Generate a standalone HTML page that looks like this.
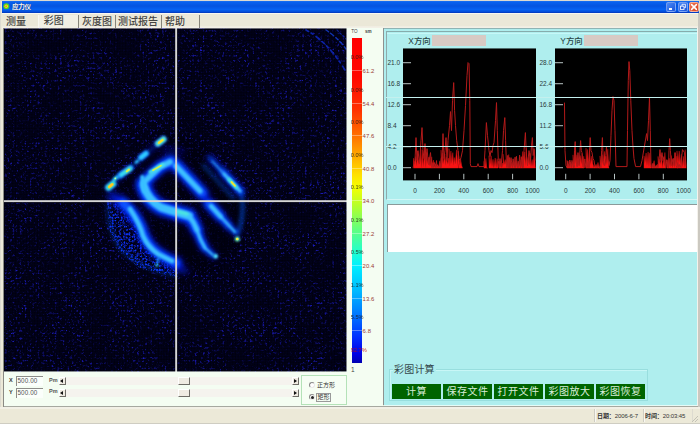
<!DOCTYPE html>
<html lang="zh-CN">
<head>
<meta charset="utf-8">
<title>应力仪</title>
<style>
*{box-sizing:border-box;margin:0;padding:0}
html,body{width:700px;height:424px;overflow:hidden;background:#ece9d8}
body{position:relative;font-family:"Liberation Sans","Noto Sans CJK SC",sans-serif;font-size:10px;color:#333;line-height:1}
.a{position:absolute}
.t{position:absolute;white-space:nowrap;line-height:1}
#title{left:2px;top:1px;width:697px;height:12.2px;background:linear-gradient(#1a70f0 0,#0860ee 1.5px,#0454e0 5px,#0662f2 8.5px,#0450dc 10.5px,#0230b4 12.2px)}
#title .tt{left:10px;top:2.7px;font-size:6.6px;font-weight:bold;color:#f4f8ff;letter-spacing:-.4px;text-shadow:0 0 1px #124}
.tb{position:absolute;top:1px;width:10px;height:10px;border-radius:2px;border:1px solid rgba(220,232,255,.4);background:linear-gradient(135deg,#4a8af8,#1c55d8)}
#menu{left:2px;top:13px;width:697px;height:15px;background:#ebe8d8;border-top:1px solid #f8f7f0}
#menu .m{position:absolute;top:2.5px;font-size:10px;color:#454543;font-weight:500;white-space:nowrap;line-height:1}
#menu .s{position:absolute;top:1px;width:1px;height:14px;background:#86847a}
#img{left:4px;top:28px;width:343px;height:344px;background:#00000f;overflow:hidden}
#ctl{left:4px;top:372px;width:379px;height:35px;background:#f4fdf2}
#cbar{left:347px;top:28px;width:36px;height:344px;background:#f4fdf2}
#right{left:384px;top:28px;width:313.2px;height:376.6px;background:#afeeee}
#status{left:0;top:407px;width:700px;height:17px;background:#ece9d8}
.num{font-size:6.5px;color:#2a3a3a}
.sb{width:7px;height:8px;background:#efebe2;border:1px solid #fff;border-right-color:#6e6c66;border-bottom-color:#6e6c66}
.ar{width:0;height:0;border:2px solid transparent}
.btn{position:absolute;top:384px;width:49px;height:15px;background:#006400;color:#d8ecd8;font-size:10px;text-align:center;line-height:15px;letter-spacing:.5px;white-space:nowrap}
</style>
</head>
<body>
<!-- window frame -->
<div class="a" style="left:0;top:0;width:700px;height:424px;background:#dcdad0"></div>
<div class="a" style="left:1px;top:1px;width:698px;height:423px;background:#ece9d8"></div>
<div class="a" id="title">
  <svg class="a" style="left:0;top:0" width="10" height="12" viewBox="0 0 10 12"><circle cx="4.3" cy="5.3" r="3" fill="#58d020"/><circle cx="4.3" cy="5.3" r="1.7" fill="#f0e020"/><circle cx="4.1" cy="5.3" r="0.8" fill="#f07020"/></svg>
  <span class="t tt">应力仪</span>
  <div class="tb" style="left:664px"><i class="a" style="left:1.6px;top:5px;width:3.6px;height:1.5px;background:#f4f8ff"></i></div>
  <div class="tb" style="left:676px"><svg class="a" style="left:0;top:0" width="8" height="8" viewBox="0 0 8 8"><path d="M3 3V1.3H6.6V4.6H5.2" fill="none" stroke="#e8f0ff" stroke-width=".9"/><rect x="1.5" y="3.2" width="3.5" height="3.2" fill="#2a60dc" stroke="#f0f4ff" stroke-width=".9"/></svg></div>
  <div class="tb" style="left:687px;background:linear-gradient(135deg,#ee7a5a,#d8421c);border-color:rgba(255,230,220,.6)">
    <svg class="a" style="left:0;top:0" width="8" height="8" viewBox="0 0 8 8"><path d="M1.6 1.6L6.4 6.4M6.4 1.6L1.6 6.4" stroke="#fff" stroke-width="1.5" stroke-linecap="round"/></svg>
  </div>
</div>
<div class="a" id="menu">
  <div class="a" style="left:0;top:12px;width:696px;height:3px;background:linear-gradient(#efece0,#f6f4ec)"></div>
  <div class="a" style="left:37px;top:1px;width:39px;height:13px;background:#f1efe4"></div>
  <span class="m" style="left:4px">测量</span>
  <span class="m" style="left:41.7px;top:1.5px">彩图</span>
  <span class="m" style="left:80px">灰度图</span>
  <span class="m" style="left:116px">测试报告</span>
  <span class="m" style="left:163px">帮助</span>
  <i class="s" style="left:36px;background:#f8f8f2"></i>
  <i class="s" style="left:76px"></i>
  <i class="s" style="left:113px"></i>
  <i class="s" style="left:159px"></i>
  <i class="s" style="left:197px"></i>
</div>
<div class="a" style="left:3px;top:28px;width:1px;height:379px;background:#8a8a84"></div>
<div class="a" style="left:698.4px;top:13px;width:1.6px;height:411px;background:#cbc8c0"></div>
<div class="a" style="left:697.2px;top:28px;width:1.2px;height:379px;background:#f4f2ec"></div>
<div class="a" id="img"><svg class="a" style="left:0;top:0" width="343" height="344" viewBox="4 28 343 344">
<defs>
<filter id="nz" x="0" y="0" width="100%" height="100%" color-interpolation-filters="sRGB">
<feTurbulence type="fractalNoise" baseFrequency="0.4" numOctaves="2" seed="11"/>
<feColorMatrix values="0 0 0 0 0.11  0 0 0 0 0.11  0 0 0 0 0.75  5 0 0 0 -2.8"/>
<feGaussianBlur stdDeviation="0.45" result="sp"/>
<feTurbulence type="fractalNoise" baseFrequency="0.035" numOctaves="2" seed="5"/>
<feColorMatrix values="0 0 0 0 1  0 0 0 0 1  0 0 0 0 1  1.8 0 0 0 -0.2" result="lf"/>
<feComposite in="sp" in2="lf" operator="in"/>
</filter>
<filter id="nz2" x="0" y="0" width="100%" height="100%" color-interpolation-filters="sRGB">
<feTurbulence type="fractalNoise" baseFrequency="0.42" numOctaves="2" seed="4"/>
<feColorMatrix values="0 0 0 0 0.05  0 0 0 0 0.2  0 0 0 0 1  7 0 0 0 -3.3"/>
</filter>
<filter id="b3" x="-30%" y="-30%" width="160%" height="160%"><feGaussianBlur stdDeviation="3"/></filter>
<filter id="b2" x="-30%" y="-30%" width="160%" height="160%"><feGaussianBlur stdDeviation="2"/></filter>
<filter id="b1" x="-30%" y="-30%" width="160%" height="160%"><feGaussianBlur stdDeviation="1.1"/></filter>
<filter id="b0" x="-30%" y="-30%" width="160%" height="160%"><feGaussianBlur stdDeviation="0.7"/></filter>
<pattern id="gr" x="4" y="29" width="2.75" height="2.75" patternUnits="userSpaceOnUse">
<rect x="0" y="0" width="2.75" height="0.9" fill="#000008" opacity=".5"/>
<rect x="0" y="0" width="0.9" height="2.75" fill="#000008" opacity=".5"/>
</pattern>
<clipPath id="spk"><path d="M107 200 L122 204 L134 216 L142 230 L146 245 L154 255 L166 262 L178 268 L178 277 L157 273 L138 267 L119 250 L109 229 Z"/></clipPath>
</defs>
<rect x="4" y="28" width="343" height="344" fill="#01011a"/>
<rect x="4" y="28" width="343" height="344" filter="url(#nz)"/>
<!-- dark interior of the specimen -->
<path d="M110 188 L163 138 L186 139 L207 152 L241 188 L245 215 L239 243 L217 267 L180 276 L150 262 L128 226 L118 206 Z" fill="#000008" opacity=".5" filter="url(#b2)"/>
<!-- speckled crescent -->
<g clip-path="url(#spk)"><rect x="100" y="195" width="90" height="90" filter="url(#nz2)"/></g>
<rect x="4" y="28" width="343" height="344" fill="url(#gr)"/>
<!-- top-right arcs -->
<g fill="none" stroke-linecap="round" filter="url(#b0)">
<path d="M306 30 Q328 42 345 70" stroke="#1030e0" stroke-width="1.7" stroke-dasharray="3 3 2 4 5 3" opacity=".7"/>
<path d="M326 30 Q338 38 346 49" stroke="#1848f0" stroke-width="1.5" stroke-dasharray="3 2.5 4 3" opacity=".7"/>
<path d="M337 30 L346 39" stroke="#1038e8" stroke-width="1.2" stroke-dasharray="2 2" opacity=".5"/>
</g>
<!-- glow layer -->
<g fill="none" stroke="#0418f0" stroke-linecap="round" stroke-linejoin="round" filter="url(#b3)">
<path d="M143 183 L160 167 L171 161 L177 166 L203 194" stroke-width="12"/>
<path d="M143 184 Q147 200 161 207.5 Q177 212.5 189 216" stroke-width="15"/>
<path d="M189 216 Q194 222 197 230" stroke-width="12"/>
<path d="M197 230 Q200 240 205 248" stroke-width="8"/>
<path d="M205 248 L214 256" stroke-width="5"/>
<path d="M208 203 L220 216" stroke-width="10"/>
<path d="M220 216 L229 226" stroke-width="7"/>
<path d="M229 226 L237 234" stroke-width="4"/>
<path d="M121 201 Q134 212 141 227 Q145 242 154 250 Q164 258 177 263" stroke-width="11"/>
<path d="M112 196 Q126 206 136 222" stroke-width="9" opacity=".75"/>
<path d="M210 158 L241 192" stroke-width="4.5"/>
<path d="M224 173 L241 192" stroke-width="7"/>
<path d="M110 186 L161 141" stroke-width="4" opacity=".5"/>
<path d="M163 151 Q172 146 184 152" stroke-width="3" opacity=".6"/>
<path d="M130 215 L150 245 L176 268" stroke-width="6" opacity=".7"/>
<path d="M172 266 L186 271" stroke-width="5" opacity=".8"/>
</g>
<!-- body layer -->
<g fill="none" stroke="#0858ff" stroke-linecap="round" stroke-linejoin="round" filter="url(#b2)">
<path d="M143 183 L160 167 L171 161 L177 166 L202 193" stroke-width="8.5"/>
<path d="M143 184 Q147 200 161 207.5 Q177 212.5 189 216" stroke-width="11"/>
<path d="M189 216 Q194 222 197 230" stroke-width="8.5"/>
<path d="M197 230 Q200 240 205 248" stroke-width="5.5"/>
<path d="M205 248 L214 256" stroke-width="3.5"/>
<path d="M209 204 L220 216" stroke-width="7.5"/>
<path d="M220 216 L229 226" stroke-width="5"/>
<path d="M229 226 L236.5 233.5" stroke-width="3"/>
<path d="M123 203 Q134 212 141 227 Q145 242 154 250 Q164 258 176 263" stroke-width="7.5"/>
<path d="M209 157 L224 173" stroke-width="2.4" opacity=".8"/>
<path d="M222 171 L241 192" stroke-width="5"/>
<path d="M203 165 L234 199" stroke-width="2" opacity=".7"/>
<path d="M241.5 194 Q245 215 238 233" stroke-width="2.2"/>
<path d="M108 203 Q107 232 122 251 Q140 268 176 276" stroke-width="1.6" opacity=".6"/>
<path d="M110 186 L161 141" stroke-width="2" opacity=".3"/>
</g>
<!-- core (cyan) -->
<g fill="none" stroke="#3cc0ff" stroke-linecap="round" stroke-linejoin="round" filter="url(#b1)">
<path d="M143 183 L160 167 L170 162" stroke-width="5.6"/>
<path d="M176 166 L200 191" stroke-width="5.2"/>
<path d="M144 186 Q148 200 161 207.5 Q177 212.5 189 216" stroke-width="7.6"/>
<path d="M189 216 Q194 222 197 230" stroke-width="5"/>
<path d="M197 230 Q200 240 205 248" stroke-width="3"/>
<path d="M205 248 L213 255" stroke-width="1.8"/>
<path d="M211 206 L221 217" stroke-width="4.2"/>
<path d="M221 217 L235 232" stroke-width="2.2"/>
<path d="M130 209 Q140 224 143 236 Q148 247 158 254 L172 261" stroke-width="4.6"/>
<path d="M212 161 L225 175" stroke-width="1.4" opacity=".8"/>
<path d="M224 174 L240 191" stroke-width="3.2"/>
</g>
<!-- highlights -->
<g filter="url(#b1)" stroke-linecap="round" fill="none">
<path d="M108.5 187.5 L113 183.8" stroke="#1878ff" stroke-width="7.5"/>
<path d="M120 175.5 L130.5 168" stroke="#1070ff" stroke-width="6.5"/>
<path d="M141 157.5 L146 153.5" stroke="#1070ff" stroke-width="6.5"/>
<path d="M158 143.5 L163.5 139.3" stroke="#1878ff" stroke-width="7"/>
<path d="M142.3 177 L144.2 191" stroke="#38c0ff" stroke-width="4.2"/>
<path d="M108.5 187.5 L113 183.8" stroke="#40e8c0" stroke-width="5"/>
<path d="M114.3 179.3 L116.3 177.6" stroke="#30d8ff" stroke-width="3.6"/>
<path d="M121 175 L124 172.8" stroke="#38e0f0" stroke-width="3.8"/>
<path d="M126 171.8 L130 168.8" stroke="#48e8d0" stroke-width="4.2"/>
<path d="M136 162.3 L137.6 161" stroke="#28b8ff" stroke-width="3"/>
<path d="M141 157.5 L146 153.5" stroke="#30d0ff" stroke-width="4"/>
<path d="M158 143.5 L163.5 139.3" stroke="#60f0c0" stroke-width="4.6"/>
<path d="M150 172 L163 164.5" stroke="#50e8e0" stroke-width="3.2"/>
<path d="M229 179.5 L236.5 187.5" stroke="#40e0e0" stroke-width="3.6"/>
<circle cx="237.3" cy="239" r="2.5" fill="#60f0c0" stroke="none"/>
<circle cx="215.7" cy="256.3" r="2.2" fill="#50e8ff" stroke="none"/>
<circle cx="157" cy="265" r="1.6" fill="#30d8f0" stroke="none"/>
<path d="M157.5 262 L158.5 258" stroke="#28b0ff" stroke-width="1.6"/>
<path d="M177 211.5 L187 214" stroke="#50f0d8" stroke-width="3.5" opacity=".8"/>
</g>
<g filter="url(#b0)" stroke-linecap="round" fill="none">
<path d="M109.3 186.9 L112.3 184.4" stroke="#ffc820" stroke-width="2.8"/>
<path d="M126.8 171.3 L129 169.6" stroke="#d8f048" stroke-width="2"/>
<path d="M159 142.7 L162.5 140.1" stroke="#f8e028" stroke-width="2.4"/>
<path d="M153 170.3 L161 165.6" stroke="#d8f048" stroke-width="1.6"/>
<path d="M231.5 182 L235 185.8" stroke="#f0e830" stroke-width="1.9"/>
<circle cx="237.3" cy="239" r="1.3" fill="#f8f040" stroke="none"/>
<circle cx="115.3" cy="178.4" r="0.9" fill="#b0ffa0" stroke="none"/>
</g>
<rect x="175.2" y="28" width="1.9" height="344" fill="#d6d6d6"/>
<rect x="4" y="200.2" width="343" height="1.9" fill="#d6d6d6"/>
</svg>
</div>
<div class="a" style="left:4px;top:28px;width:343px;height:1px;background:rgba(240,238,228,.45)"></div><div class="a" style="left:4px;top:371px;width:343px;height:1px;background:rgba(244,253,242,.55)"></div><div class="a" style="left:346px;top:28px;width:1px;height:344px;background:rgba(244,253,242,.5)"></div>
<div class="a" id="ctl"></div>
<div class="a" id="cbar"></div>
<!-- X / Y inputs -->
<span class="t" style="left:9px;top:378px;font-size:5.5px;color:#333;font-weight:bold">X</span>
<span class="t" style="left:9px;top:390px;font-size:5.5px;color:#333;font-weight:bold">Y</span>
<div class="a" style="left:16px;top:376px;width:27px;height:10px;background:#fbfffb;border-top:1px solid #8c8c88;border-left:1px solid #8c8c88"></div>
<div class="a" style="left:16px;top:388px;width:27px;height:10px;background:#fbfffb;border-top:1px solid #8c8c88;border-left:1px solid #8c8c88"></div>
<span class="t" style="left:17.5px;top:378px;font-size:6.3px;color:#555;letter-spacing:.1px">500.00</span>
<span class="t" style="left:17.5px;top:390px;font-size:6.3px;color:#555;letter-spacing:.1px">500.00</span>
<span class="t" style="left:49px;top:377.5px;font-size:5.5px;color:#555;font-weight:bold">Pm</span>
<span class="t" style="left:49px;top:389px;font-size:5.5px;color:#555;font-weight:bold">Pm</span>
<!-- scrollbars -->
<div class="a" style="left:66px;top:376.5px;width:226px;height:8px;background:#f5f3ee"></div>
<div class="a" style="left:66px;top:388.5px;width:226px;height:8px;background:#f5f3ee"></div>
<div class="a sb" style="left:59px;top:376.5px"></div><div class="a sb" style="left:59px;top:388.5px"></div>
<div class="a sb" style="left:292px;top:376.5px"></div><div class="a sb" style="left:292px;top:388.5px"></div>
<div class="a sb" style="left:178px;top:376.5px;width:12px"></div><div class="a sb" style="left:178px;top:388.5px;width:12px"></div>
<i class="a ar" style="left:59.5px;top:378.5px;border-right:3px solid #111;border-left:none"></i><i class="a ar" style="left:59.5px;top:390.5px;border-right:3px solid #111;border-left:none"></i>
<i class="a ar" style="left:294px;top:378.5px;border-left:3px solid #111;border-right:none"></i><i class="a ar" style="left:294px;top:390.5px;border-left:3px solid #111;border-right:none"></i>
<!-- radio group -->
<div class="a" style="left:301px;top:375px;width:46px;height:30px;border:1px solid #b4e2b8;background:#f6fef4"></div>
<div class="a" style="left:309px;top:382px;width:6px;height:6px;border-radius:50%;border:1px solid #8a8a8a;border-right-color:#e8e8e8;border-bottom-color:#e8e8e8;background:#fff"></div>
<div class="a" style="left:309px;top:394px;width:6px;height:6px;border-radius:50%;border:1px solid #8a8a8a;border-right-color:#e8e8e8;border-bottom-color:#e8e8e8;background:#fff"></div>
<div class="a" style="left:310.5px;top:395.5px;width:3px;height:3px;border-radius:50%;background:#222"></div>
<span class="t" style="left:317px;top:382px;font-size:6px;color:#333">正方形</span>
<div class="a" style="left:316px;top:393px;width:15px;height:9px;border:1px solid #999"></div>
<span class="t" style="left:317.5px;top:394px;font-size:6px;color:#333">矩形</span>
<div class="a" style="left:351.6px;top:38px;width:10px;height:325px;background:linear-gradient(#ff0000 0%,#ff0800 12%,#ff3000 22%,#ff7000 30%,#ffa800 36%,#ffe000 42%,#f4ff00 46%,#b0ff30 52%,#60ff80 59%,#20ffd0 66%,#00f0ff 70%,#00b8ff 78%,#0078ff 85%,#0030ff 92%,#0000e8 97%,#0000b0 100%)"></div>
<i class="a" style="left:352px;top:70.0px;width:11px;height:1px;background:rgba(255,255,255,.35)"></i>
<span class="t" style="left:362.6px;top:69.4px;font-size:5.9px;color:#9a3a34;letter-spacing:.1px">61.2</span>
<i class="a" style="left:352px;top:102.5px;width:11px;height:1px;background:rgba(255,255,255,.35)"></i>
<span class="t" style="left:362.6px;top:101.9px;font-size:5.9px;color:#9a3a34;letter-spacing:.1px">54.4</span>
<i class="a" style="left:352px;top:135.0px;width:11px;height:1px;background:rgba(255,255,255,.35)"></i>
<span class="t" style="left:362.6px;top:134.4px;font-size:5.9px;color:#9a3a34;letter-spacing:.1px">47.6</span>
<i class="a" style="left:352px;top:167.5px;width:11px;height:1px;background:rgba(255,255,255,.35)"></i>
<span class="t" style="left:362.6px;top:166.9px;font-size:5.9px;color:#9a3a34;letter-spacing:.1px">40.8</span>
<i class="a" style="left:352px;top:200.0px;width:11px;height:1px;background:rgba(255,255,255,.35)"></i>
<span class="t" style="left:362.6px;top:199.4px;font-size:5.9px;color:#9a3a34;letter-spacing:.1px">34.0</span>
<i class="a" style="left:352px;top:232.5px;width:11px;height:1px;background:rgba(255,255,255,.35)"></i>
<span class="t" style="left:362.6px;top:231.9px;font-size:5.9px;color:#9a3a34;letter-spacing:.1px">27.2</span>
<i class="a" style="left:352px;top:265.0px;width:11px;height:1px;background:rgba(255,255,255,.35)"></i>
<span class="t" style="left:362.6px;top:264.4px;font-size:5.9px;color:#9a3a34;letter-spacing:.1px">20.4</span>
<i class="a" style="left:352px;top:297.5px;width:11px;height:1px;background:rgba(255,255,255,.35)"></i>
<span class="t" style="left:362.6px;top:296.9px;font-size:5.9px;color:#9a3a34;letter-spacing:.1px">13.6</span>
<i class="a" style="left:352px;top:330.0px;width:11px;height:1px;background:rgba(255,255,255,.35)"></i>
<span class="t" style="left:362.6px;top:329.4px;font-size:5.9px;color:#9a3a34;letter-spacing:.1px">6.8</span>
<span class="t" style="left:350.8px;top:55.4px;font-size:5.6px;color:#1c1c18;opacity:.85;letter-spacing:0">0.0%</span>
<span class="t" style="left:350.8px;top:87.9px;font-size:5.6px;color:#1c1c18;opacity:.85;letter-spacing:0">0.0%</span>
<span class="t" style="left:350.8px;top:120.4px;font-size:5.6px;color:#1c1c18;opacity:.85;letter-spacing:0">0.0%</span>
<span class="t" style="left:350.8px;top:152.9px;font-size:5.6px;color:#1c1c18;opacity:.85;letter-spacing:0">0.0%</span>
<span class="t" style="left:350.8px;top:185.4px;font-size:5.6px;color:#1c1c18;opacity:.85;letter-spacing:0">0.1%</span>
<span class="t" style="left:350.8px;top:217.9px;font-size:5.6px;color:#1c1c18;opacity:.85;letter-spacing:0">0.1%</span>
<span class="t" style="left:350.8px;top:250.4px;font-size:5.6px;color:#1c1c18;opacity:.85;letter-spacing:0">0.5%</span>
<span class="t" style="left:350.8px;top:282.9px;font-size:5.6px;color:#1c1c18;opacity:.85;letter-spacing:0">1.1%</span>
<span class="t" style="left:350.8px;top:315.4px;font-size:5.6px;color:#1c1c18;opacity:.85;letter-spacing:0">5.5%</span>
<span class="t" style="left:350.8px;top:347.9px;font-size:5.6px;color:#c01010;opacity:.85;letter-spacing:0">92.7%</span>
<span class="t" style="left:351.3px;top:30.2px;font-size:4.6px;color:#444">TO</span>
<span class="t" style="left:365px;top:30.2px;font-size:4.6px;color:#444;font-weight:bold">sm</span>
<span class="t" style="left:351px;top:366.5px;font-size:6.5px;color:#444">1</span>
<div class="a" id="right"></div>
<div class="a" style="left:384px;top:28px;width:313px;height:1px;background:#8fb4b4"></div>
<div class="a" style="left:383px;top:28px;width:1px;height:377px;background:#8e9290"></div>
<div class="a" style="left:386px;top:31px;width:311px;height:169px;border-left:1.6px solid #8fabab;border-top:1.5px solid #86acac;border-bottom:1px solid #d4f6f6"></div>
<div class="a" style="left:387px;top:32.6px;width:310px;height:1.2px;background:#c6f8f8"></div>
<div class="a" style="left:403px;top:49px;width:132.5px;height:131px;background:#000"></div>
<div class="a" style="left:403px;top:48px;width:132.5px;height:1px;background:rgba(0,0,0,.55)"></div>
<div class="a" style="left:403px;top:180px;width:132.5px;height:1px;background:rgba(0,0,0,.4)"></div>
<svg class="a" style="left:403px;top:48px" width="132.5" height="132" viewBox="403 48 132.5 132">
<rect x="403" y="62.2" width="8" height="1" fill="#b8c4c4"/>
<rect x="403" y="83.2" width="8" height="1" fill="#b8c4c4"/>
<rect x="403" y="104.2" width="8" height="1" fill="#b8c4c4"/>
<rect x="403" y="125.2" width="8" height="1" fill="#b8c4c4"/>
<rect x="403" y="146.2" width="8" height="1" fill="#b8c4c4"/>
<rect x="403" y="167.2" width="8" height="1" fill="#b8c4c4"/>
<rect x="414.5" y="173.8" width="1" height="5.5" fill="#b8c4c4"/>
<rect x="438.9" y="173.8" width="1" height="5.5" fill="#b8c4c4"/>
<rect x="463.3" y="173.8" width="1" height="5.5" fill="#b8c4c4"/>
<rect x="487.7" y="173.8" width="1" height="5.5" fill="#b8c4c4"/>
<rect x="512.1" y="173.8" width="1" height="5.5" fill="#b8c4c4"/>
<g transform="translate(0,0.6)">
<path d="M413.5 167.5 L413.5 157.6 L414.4 163.4 L415.6 155.9 L416.5 165.1 L417.5 150.4 L418.4 163.7 L419.0 159.1 L419.9 163.5 L420.9 148.8 L421.8 167.5 L422.7 149.4 L423.6 166.4 L425.0 146.9 L425.9 167.4 L426.5 151.9 L427.4 163.0 L428.3 156.5 L429.2 165.5 L429.9 156.4 L430.8 165.4 L431.7 156.2 L432.6 166.4 L432.0 167.5 Z" fill="#f81414" stroke="#e81414" stroke-width=".4" stroke-linejoin="round"/>
<path d="M432.0 167.5 L432.0 161.7 L432.9 167.0 L433.5 159.5 L434.4 166.5 L435.5 163.4 L436.4 165.7 L437.7 163.8 L438.6 166.9 L439.8 160.2 L440.7 165.8 L441.0 167.5 Z" fill="#f81414" stroke="#e81414" stroke-width=".4" stroke-linejoin="round"/>
<path d="M441.0 167.5 L441.0 149.5 L441.9 164.3 L442.7 152.4 L443.6 163.3 L444.9 153.4 L445.8 164.7 L446.4 156.6 L447.3 163.7 L448.3 157.4 L449.2 164.9 L449.0 167.5 Z" fill="#f81414" stroke="#e81414" stroke-width=".4" stroke-linejoin="round"/>
<path d="M449.0 167.5 L449.0 148.1 L449.9 165.3 L450.9 150.4 L451.8 162.8 L452.8 152.0 L453.7 164.6 L454.3 156.9 L455.2 163.3 L456.6 149.2 L457.5 165.1 L458.2 150.5 L459.1 161.6 L458.5 167.5 Z" fill="#f81414" stroke="#e81414" stroke-width=".4" stroke-linejoin="round"/>
<path d="M459.0 167.5 L459.0 158.7 L459.9 164.9 L460.7 158.9 L461.6 164.6 L462.5 167.5 Z" fill="#f81414" stroke="#e81414" stroke-width=".4" stroke-linejoin="round"/>
<path d="M484.0 167.5 L484.0 160.7 L484.9 166.9 L485.9 157.8 L486.8 167.5 L487.5 167.5 Z" fill="#f81414" stroke="#e81414" stroke-width=".4" stroke-linejoin="round"/>
<path d="M489.0 167.5 L489.0 155.1 L489.9 164.8 L491.1 155.2 L492.0 165.9 L493.0 158.7 L493.9 167.3 L495.2 157.4 L496.1 166.9 L497.1 158.1 L498.0 166.4 L498.0 167.5 Z" fill="#f81414" stroke="#e81414" stroke-width=".4" stroke-linejoin="round"/>
<path d="M499.0 167.5 L499.0 160.3 L499.9 166.0 L501.0 160.8 L501.9 167.4 L502.7 162.4 L503.6 166.1 L503.0 167.5 Z" fill="#f81414" stroke="#e81414" stroke-width=".4" stroke-linejoin="round"/>
<path d="M503.0 167.5 L503.0 153.5 L503.9 164.6 L505.2 158.9 L506.1 164.5 L507.2 160.7 L508.1 167.4 L508.7 153.9 L509.6 166.6 L510.0 167.5 Z" fill="#f81414" stroke="#e81414" stroke-width=".4" stroke-linejoin="round"/>
<path d="M510.0 167.5 L510.0 158.5 L510.9 166.7 L511.6 162.2 L512.5 166.2 L513.2 161.3 L514.1 165.8 L515.1 160.9 L516.0 166.4 L516.6 160.4 L517.5 166.5 L518.2 162.6 L519.1 165.3 L520.1 161.8 L521.0 166.0 L521.0 167.5 Z" fill="#f81414" stroke="#e81414" stroke-width=".4" stroke-linejoin="round"/>
<path d="M521.0 167.5 L521.0 159.3 L521.9 167.4 L522.6 150.9 L523.5 166.7 L524.7 151.4 L525.6 164.9 L526.4 147.8 L527.3 163.7 L528.3 156.8 L529.2 164.4 L530.1 152.6 L531.0 166.0 L532.1 158.8 L533.0 166.1 L534.4 149.0 L535.3 166.0 L535.5 167.5 Z" fill="#f81414" stroke="#e81414" stroke-width=".4" stroke-linejoin="round"/>
<path d="M413.0 167.0 L415.0 160.0 L416.0 137.0 L417.0 160.0 L418.0 150.0 L419.5 163.0 L421.0 140.0 L422.0 127.0 L423.0 150.0 L424.0 158.0 L425.0 143.0 L426.0 160.0 L427.0 148.0 L428.5 164.0 L430.5 152.0 L431.5 165.0 L432.0 167.0 L432.8 163.1 L433.8 167.0 L434.6 162.0 L435.7 167.0 L436.5 160.0 L437.0 167.0 L437.8 164.9 L439.1 167.0 L439.9 162.9 L440.6 167.0 L441.4 157.0 L441.0 167.0 L442.0 160.0 L443.0 133.0 L444.0 158.0 L445.0 150.0 L446.0 137.0 L447.0 160.0 L448.0 140.0 L449.5 125.0 L450.5 111.0 L451.5 130.0 L452.5 100.0 L453.7 82.0 L454.6 110.0 L455.5 125.0 L456.7 140.0 L458.0 150.0 L459.0 158.0 L460.0 160.0 L461.0 157.0 L462.5 150.0 L464.0 130.0 L465.5 105.0 L467.0 75.0 L468.0 62.0 L469.0 63.0 L469.8 100.0 L470.3 163.0 L471.0 166.0 L477.0 166.0 L478.0 163.0 L479.0 166.0 L484.0 166.0 L485.0 150.0 L486.4 122.0 L487.5 135.0 L489.0 150.0 L490.0 156.0 L491.0 150.0 L492.0 152.0 L493.0 145.0 L494.0 142.0 L495.5 120.0 L496.5 102.0 L497.3 130.0 L498.3 160.0 L499.0 167.0 L500.0 158.0 L501.0 166.0 L502.5 150.0 L503.5 130.0 L504.8 117.0 L505.6 140.0 L506.5 165.0 L507.0 167.0 L507.8 154.8 L508.7 167.0 L509.5 157.0 L510.2 167.0 L511.0 157.0 L512.3 167.0 L513.1 158.2 L514.3 167.0 L515.1 156.6 L515.6 167.0 L516.4 155.7 L517.5 167.0 L518.3 160.7 L518.8 167.0 L519.6 154.5 L520.5 167.0 L521.3 156.1 L522.6 167.0 L523.4 156.1 L523.0 167.0 L524.0 150.0 L525.4 132.0 L526.4 155.0 L527.5 165.0 L529.0 150.0 L530.5 160.0 L531.5 145.0 L532.4 137.0 L533.2 155.0 L534.0 148.0 L535.0 160.0" fill="none" stroke="#b41a1a" stroke-width="1" stroke-linejoin="round"/></g>
</svg>
<span class="t num" style="left:387.5px;top:60.0px;width:16px;text-align:left">21.0</span>
<span class="t num" style="left:387.5px;top:81.0px;width:16px;text-align:left">16.8</span>
<span class="t num" style="left:387.5px;top:102.0px;width:16px;text-align:left">12.6</span>
<span class="t num" style="left:387.5px;top:123.0px;width:16px;text-align:left">8.4</span>
<span class="t num" style="left:387.5px;top:144.0px;width:16px;text-align:left">4.2</span>
<span class="t num" style="left:387.5px;top:165.0px;width:16px;text-align:left">0.0</span>
<span class="t num" style="left:405.0px;top:187.8px;width:20px;text-align:center">0</span>
<span class="t num" style="left:429.4px;top:187.8px;width:20px;text-align:center">200</span>
<span class="t num" style="left:453.8px;top:187.8px;width:20px;text-align:center">400</span>
<span class="t num" style="left:478.2px;top:187.8px;width:20px;text-align:center">600</span>
<span class="t num" style="left:502.6px;top:187.8px;width:20px;text-align:center">800</span>
<span class="t num" style="left:522.5px;top:187.8px;width:20px;text-align:center">1000</span>
<span class="t" style="left:408.3px;top:37.2px;font-size:8.4px;font-weight:500;color:#2a4444">X方向</span>
<div class="a" style="left:432px;top:35.2px;width:54px;height:10.5px;background:#d7cac4"></div>
<div class="a" style="left:555px;top:49px;width:131.6px;height:131px;background:#000"></div>
<div class="a" style="left:555px;top:48px;width:131.6px;height:1px;background:rgba(0,0,0,.55)"></div>
<div class="a" style="left:555px;top:180px;width:131.6px;height:1px;background:rgba(0,0,0,.4)"></div>
<svg class="a" style="left:555px;top:48px" width="131.6" height="132" viewBox="555 48 131.6 132">
<rect x="555" y="62.2" width="8" height="1" fill="#b8c4c4"/>
<rect x="555" y="83.2" width="8" height="1" fill="#b8c4c4"/>
<rect x="555" y="104.2" width="8" height="1" fill="#b8c4c4"/>
<rect x="555" y="125.2" width="8" height="1" fill="#b8c4c4"/>
<rect x="555" y="146.2" width="8" height="1" fill="#b8c4c4"/>
<rect x="555" y="167.2" width="8" height="1" fill="#b8c4c4"/>
<rect x="565.2" y="173.8" width="1" height="5.5" fill="#b8c4c4"/>
<rect x="589.6" y="173.8" width="1" height="5.5" fill="#b8c4c4"/>
<rect x="614.0" y="173.8" width="1" height="5.5" fill="#b8c4c4"/>
<rect x="638.4" y="173.8" width="1" height="5.5" fill="#b8c4c4"/>
<rect x="662.8" y="173.8" width="1" height="5.5" fill="#b8c4c4"/>
<g transform="translate(0,0.6)">
<path d="M567.0 167.5 L567.0 159.7 L567.9 165.8 L568.5 164.1 L569.4 166.0 L570.6 161.2 L571.5 166.9 L572.6 161.5 L573.5 166.5 L573.0 167.5 Z" fill="#f81414" stroke="#e81414" stroke-width=".4" stroke-linejoin="round"/>
<path d="M573.0 167.5 L573.0 154.3 L573.9 165.6 L575.1 147.6 L576.0 162.9 L577.0 154.2 L577.9 166.2 L578.5 159.2 L579.4 165.3 L580.3 154.9 L581.2 163.2 L582.2 152.8 L583.1 166.4 L583.7 155.6 L584.6 166.8 L584.0 167.5 Z" fill="#f81414" stroke="#e81414" stroke-width=".4" stroke-linejoin="round"/>
<path d="M586.0 167.5 L586.0 147.5 L586.9 164.3 L587.6 148.8 L588.5 163.7 L589.7 148.6 L590.6 163.8 L591.9 155.3 L592.8 162.8 L594.0 167.5 Z" fill="#f81414" stroke="#e81414" stroke-width=".4" stroke-linejoin="round"/>
<path d="M594.0 167.5 L594.0 164.9 L594.9 166.6 L596.1 163.7 L597.0 166.9 L598.0 161.8 L598.9 166.9 L600.0 167.5 Z" fill="#f81414" stroke="#e81414" stroke-width=".4" stroke-linejoin="round"/>
<path d="M600.0 167.5 L600.0 155.3 L600.9 163.3 L602.2 154.0 L603.1 164.8 L604.5 150.8 L605.4 165.2 L606.1 155.6 L607.0 164.1 L607.8 148.6 L608.7 166.2 L609.0 167.5 Z" fill="#f81414" stroke="#e81414" stroke-width=".4" stroke-linejoin="round"/>
<path d="M644.0 167.5 L644.0 155.2 L644.9 162.9 L646.1 152.4 L647.0 165.0 L648.1 151.3 L649.0 166.0 L649.8 152.3 L650.7 163.0 L651.5 167.5 Z" fill="#f81414" stroke="#e81414" stroke-width=".4" stroke-linejoin="round"/>
<path d="M652.0 167.5 L652.0 164.1 L652.9 166.0 L654.1 160.0 L655.0 167.2 L656.2 164.2 L657.1 166.3 L657.9 163.4 L658.8 165.9 L658.0 167.5 Z" fill="#f81414" stroke="#e81414" stroke-width=".4" stroke-linejoin="round"/>
<path d="M658.0 167.5 L658.0 155.8 L658.9 163.9 L659.7 158.6 L660.6 163.8 L661.5 154.0 L662.4 167.4 L663.3 159.0 L664.2 164.7 L664.9 151.9 L665.8 167.4 L666.0 167.5 Z" fill="#f81414" stroke="#e81414" stroke-width=".4" stroke-linejoin="round"/>
<path d="M667.0 167.5 L667.0 159.2 L667.9 166.3 L669.2 157.6 L670.1 166.6 L671.2 154.9 L672.1 167.3 L673.5 157.7 L674.4 167.3 L675.3 152.1 L676.2 163.9 L676.9 155.5 L677.8 167.4 L677.0 167.5 Z" fill="#f81414" stroke="#e81414" stroke-width=".4" stroke-linejoin="round"/>
<path d="M677.0 167.5 L677.0 150.3 L677.9 163.9 L679.2 150.4 L680.1 163.4 L681.3 153.8 L682.2 166.4 L683.3 155.7 L684.2 167.0 L685.2 149.0 L686.1 166.9 L686.5 167.5 Z" fill="#f81414" stroke="#e81414" stroke-width=".4" stroke-linejoin="round"/>
<path d="M564.5 102.0 L565.0 150.0 L566.0 165.0 L567.0 167.0 L567.8 160.6 L569.0 167.0 L569.8 159.4 L571.2 167.0 L572.0 159.8 L573.3 167.0 L574.1 164.8 L574.0 167.0 L574.5 150.0 L575.2 141.0 L576.0 160.0 L577.0 166.0 L578.0 152.0 L579.0 165.0 L580.0 150.0 L580.6 140.0 L581.3 150.0 L582.0 152.0 L583.0 166.0 L584.0 167.0 L584.8 158.3 L585.9 167.0 L586.7 158.6 L587.3 167.0 L588.1 161.2 L588.8 167.0 L589.6 160.7 L589.0 167.0 L589.5 150.0 L590.2 137.0 L591.0 150.0 L592.0 152.0 L593.0 158.0 L594.0 160.0 L595.0 166.0 L596.0 167.0 L596.8 166.0 L597.5 167.0 L598.3 165.2 L599.6 167.0 L600.4 163.7 L601.0 167.0 L601.6 150.0 L602.4 137.0 L603.2 160.0 L604.5 165.0 L605.8 155.0 L606.5 146.0 L607.3 158.0 L608.0 160.0 L609.0 165.0 L610.0 160.0 L611.0 135.0 L612.0 110.0 L613.0 96.0 L614.0 100.0 L615.0 130.0 L616.0 166.0 L627.0 166.0 L627.5 130.0 L628.3 80.0 L629.0 61.0 L629.8 70.0 L630.8 100.0 L632.0 130.0 L633.0 146.0 L634.0 158.0 L635.6 166.0 L640.5 166.0 L642.0 160.0 L644.0 148.0 L646.6 133.0 L647.5 140.0 L648.5 120.0 L649.5 97.0 L650.3 130.0 L651.0 166.0 L652.0 167.0 L652.8 162.8 L653.4 167.0 L654.2 163.5 L654.8 167.0 L655.6 166.0 L656.9 167.0 L657.7 165.2 L658.0 167.0 L659.0 160.0 L660.0 149.0 L661.0 160.0 L662.0 152.0 L663.0 160.0 L664.0 156.0 L665.0 165.0 L666.0 167.0 L666.8 159.1 L668.1 167.0 L668.9 163.3 L668.5 167.0 L669.0 150.0 L669.7 138.0 L670.4 150.0 L671.5 165.0 L673.0 158.0 L674.0 165.0 L675.0 152.0 L676.0 165.0 L677.0 167.0 L677.8 161.8 L678.9 167.0 L679.7 163.8 L681.0 167.0 L681.8 155.0 L682.5 149.0 L683.3 150.0 L684.5 152.0 L685.5 160.0 L686.0 166.0" fill="none" stroke="#b41a1a" stroke-width="1" stroke-linejoin="round"/></g>
</svg>
<span class="t num" style="left:539.5px;top:60.0px;width:16px;text-align:left">28.0</span>
<span class="t num" style="left:539.5px;top:81.0px;width:16px;text-align:left">22.4</span>
<span class="t num" style="left:539.5px;top:102.0px;width:16px;text-align:left">16.8</span>
<span class="t num" style="left:539.5px;top:123.0px;width:16px;text-align:left">11.2</span>
<span class="t num" style="left:539.5px;top:144.0px;width:16px;text-align:left">5.6</span>
<span class="t num" style="left:539.5px;top:165.0px;width:16px;text-align:left">0.0</span>
<span class="t num" style="left:555.7px;top:187.8px;width:20px;text-align:center">0</span>
<span class="t num" style="left:580.1px;top:187.8px;width:20px;text-align:center">200</span>
<span class="t num" style="left:604.5px;top:187.8px;width:20px;text-align:center">400</span>
<span class="t num" style="left:628.9px;top:187.8px;width:20px;text-align:center">600</span>
<span class="t num" style="left:653.3px;top:187.8px;width:20px;text-align:center">800</span>
<span class="t num" style="left:673.6px;top:187.8px;width:20px;text-align:center">1000</span>
<span class="t" style="left:560.3px;top:37.2px;font-size:8.4px;font-weight:500;color:#2a4444">Y方向</span>
<div class="a" style="left:584px;top:35.2px;width:54px;height:10.5px;background:#d7cac4"></div>
<div class="a" style="left:386px;top:96.7px;width:301px;height:1.5px;background:#c4f0ee"></div>
<div class="a" style="left:386px;top:145.8px;width:301px;height:1.5px;background:#c4f0ee"></div>
<div class="a" style="left:386.5px;top:203.5px;width:310.5px;height:48.5px;background:#fff;border-top:1px solid #8a9a9a;border-left:1px solid #8a9a9a"></div>
<div class="a" style="left:388.5px;top:369px;width:259px;height:32px;border:1px solid #98dede;box-shadow:inset 1px 1px 0 #c8f6f6"></div>
<span class="t" style="left:393px;top:365px;font-size:10px;color:#34484c;background:#afeeee;padding:0 1px;letter-spacing:.2px">彩图计算</span>
<div class="btn" style="left:392px">计算</div>
<div class="btn" style="left:443px">保存文件</div>
<div class="btn" style="left:494px">打开文件</div>
<div class="btn" style="left:545px">彩图放大</div>
<div class="btn" style="left:596px">彩图恢复</div>
<div class="a" id="status"></div>
<div class="a" style="left:384px;top:404.6px;width:313.2px;height:1.4px;background:#e6fbf6"></div>
<div class="a" style="left:4px;top:406px;width:694px;height:1px;background:#a6a8a0"></div>
<div class="a" style="left:0;top:407px;width:700px;height:1.5px;background:#f2f0e6"></div>
<div class="a" style="left:0;top:423px;width:700px;height:1px;background:#cfcdc2"></div>
<div class="a" style="left:594px;top:409px;width:1px;height:13px;background:#cfcdc2"></div>
<div class="a" style="left:595px;top:409px;width:1px;height:13px;background:#f8f7f2"></div>
<div class="a" style="left:642.5px;top:409px;width:1px;height:13px;background:#cfcdc2"></div>
<div class="a" style="left:643.5px;top:409px;width:1px;height:13px;background:#f8f7f2"></div>
<div class="a" style="left:692px;top:409px;width:1px;height:13px;background:#dddbd0"></div>
<span class="t" style="left:597px;top:413px;font-size:6px;color:#333;letter-spacing:-.1px"><b>日期：</b>2006-6-7</span>
<span class="t" style="left:645px;top:413px;font-size:6px;color:#333;letter-spacing:-.1px"><b>时间：</b>20:03:45</span>
<svg class="a" style="left:691px;top:415px" width="8" height="8" viewBox="0 0 8 8"><path d="M7 1L1 7M7 4L4 7" stroke="#c4c2b6" stroke-width="1"/></svg>
</body>
</html>
